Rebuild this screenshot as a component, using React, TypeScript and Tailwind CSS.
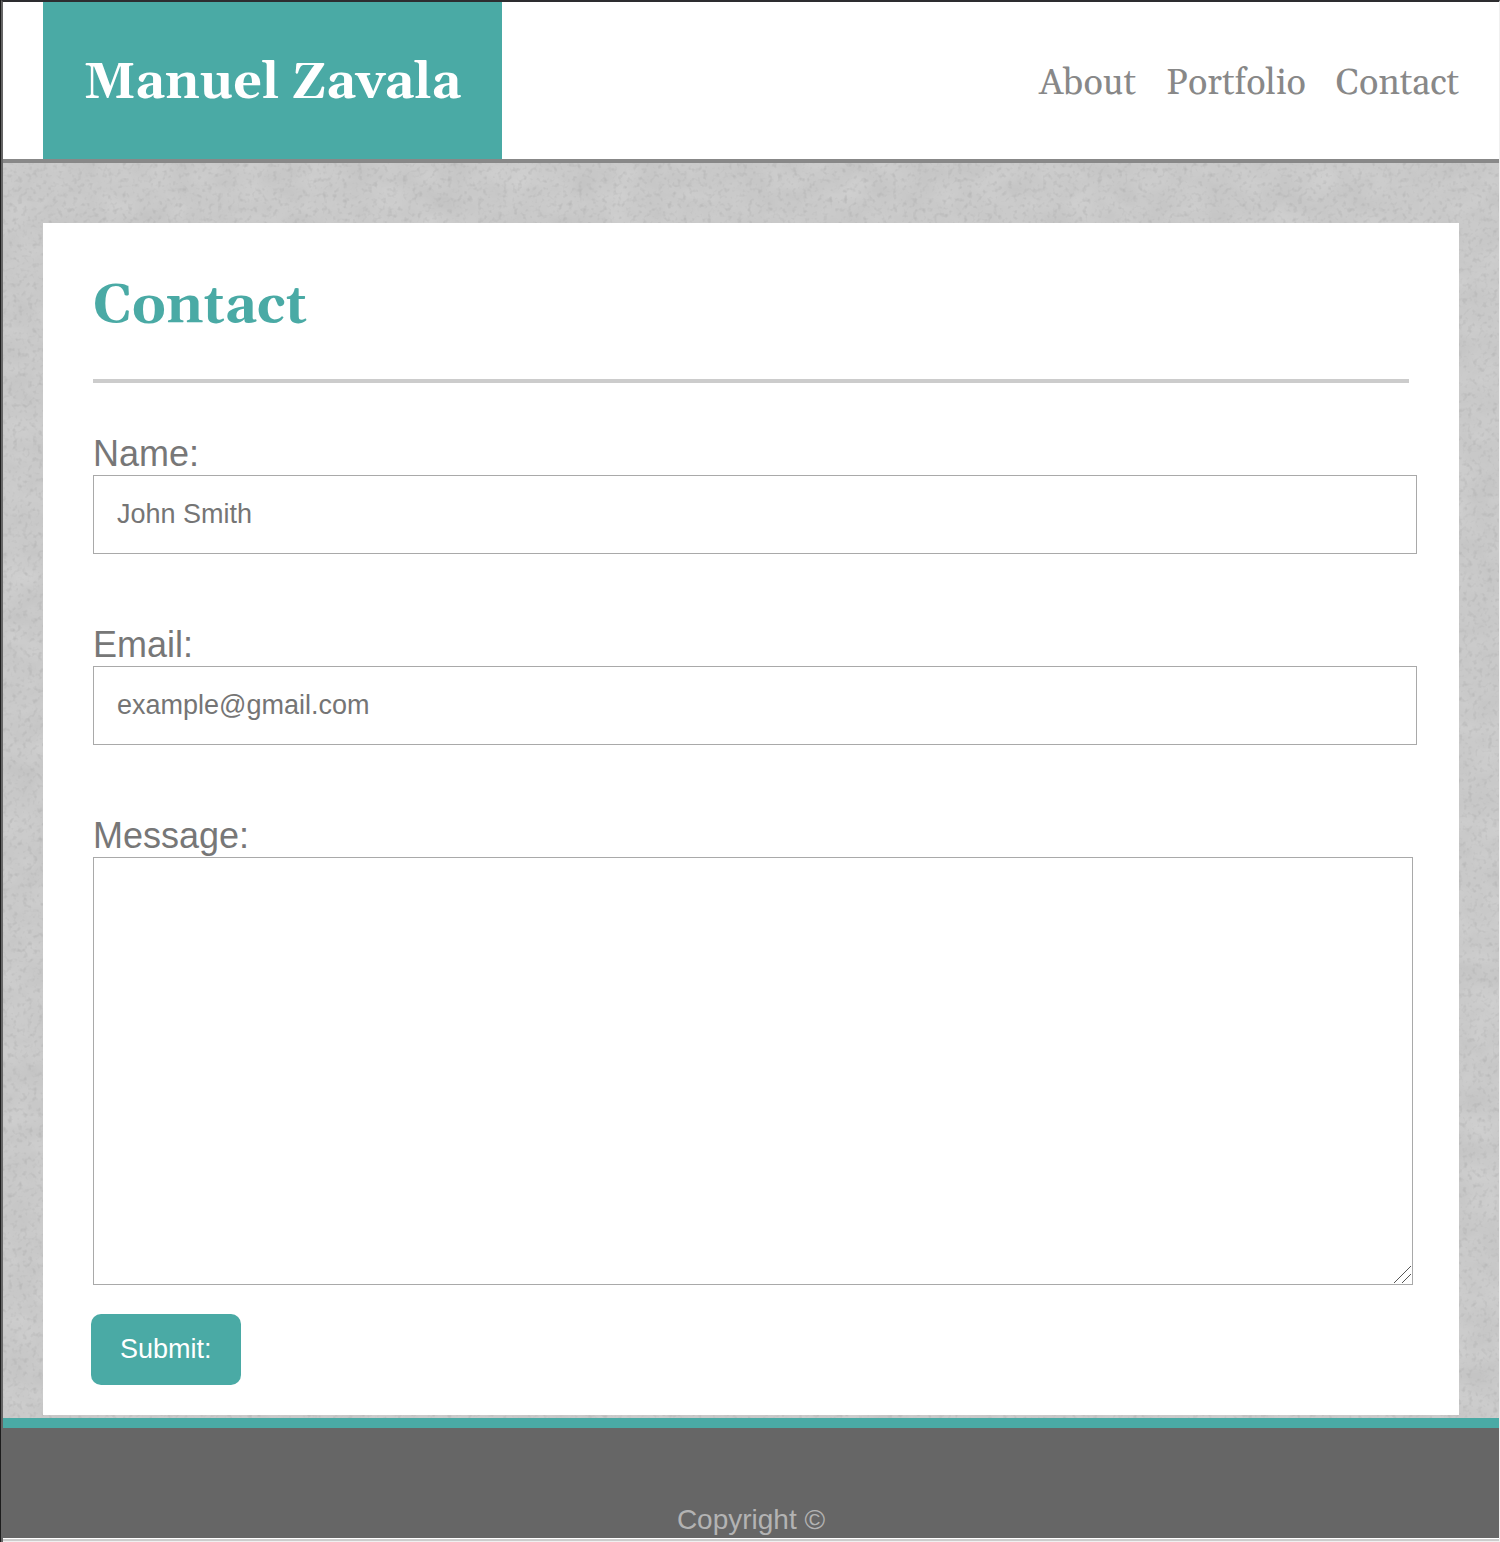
import React from "react";

const links = ["About", "Portfolio", "Contact"];

function Paper() {
  return (
    <svg className="absolute inset-0 -z-10 h-full w-full" aria-hidden="true">
      <filter id="grain" x="0" y="0" width="100%" height="100%" colorInterpolationFilters="sRGB">
        <feTurbulence type="fractalNoise" baseFrequency="0.03 0.04" numOctaves="4" seed="4" result="n" />
        <feColorMatrix in="n" values="0.04 0.04 0 0 0.75  0.04 0.04 0 0 0.75  0.04 0.04 0 0 0.75  0 0 0 0 1" result="base" />
        <feTurbulence type="fractalNoise" baseFrequency="0.2" numOctaves="2" seed="9" result="s" />
        <feColorMatrix in="s" values="0 0 0 0 0.68  0 0 0 0 0.68  0 0 0 0 0.68  1.6 0 0 0 -0.84" result="specks" />
        <feMerge>
          <feMergeNode in="base" />
          <feMergeNode in="specks" />
        </feMerge>
      </filter>
      <rect width="100%" height="100%" filter="url(#grain)" />
    </svg>
  );
}

function Field({ id, label, type, placeholder }: { id: string; label: string; type: string; placeholder: string }) {
  return (
    <div className="mb-[70px]">
      <label htmlFor={id} className="block text-4xl leading-[42px]">
        {label}
      </label>
      <input
        id={id}
        type={type}
        placeholder={placeholder}
        className="block h-[79px] w-[calc(100%+8px)] border border-[#a9a9a9] bg-white px-[23px] text-[27px] text-[#757575] placeholder:text-[#757575]"
      />
    </div>
  );
}

export default function App() {
  return (
    <div className="border-l border-[#1d1d1d] font-['Liberation_Sans',Arial,sans-serif]">
      <div className="border-t-2 border-r border-l-2 border-t-[#2d2d30] border-r-[#f0f0f0] border-l-[#666666] bg-white">
        <header className="flex items-center justify-between border-b-4 border-[#888888] px-10">
          <a
            href="#"
            className="flex h-[157px] items-center bg-[#4aaaa5] px-[41px] pt-1.5 font-[Georgia,Gelasio,'Liberation_Serif',serif] text-[50px] font-bold whitespace-nowrap text-white"
          >
            Manuel Zavala
          </a>
          <nav className="flex gap-[30px] pt-1.5 font-[Georgia,Gelasio,'Liberation_Serif',serif] text-4xl text-[#888888]">
            {links.map((l) => (
              <a key={l} href={`#${l.toLowerCase()}`}>
                {l}
              </a>
            ))}
          </nav>
        </header>

        <main className="relative isolate px-10 pt-[60px] pb-[3px]">
          <Paper />
          <section className="bg-white px-[50px] pt-[53px] pb-[30px] text-[#777777]">
            <h1 className="mb-[43px] font-[Georgia,Gelasio,'Liberation_Serif',serif] text-[54px] leading-[60px] font-bold text-[#4aaaa5]">
              Contact
            </h1>
            <hr className="mb-[50px] border-t-4 border-[#cccccc]" />
            <form onSubmit={(e) => e.preventDefault()}>
              <Field id="name" label="Name:" type="text" placeholder="John Smith" />
              <Field id="email" label="Email:" type="email" placeholder="example@gmail.com" />
              <label htmlFor="message" className="block text-4xl leading-[42px]">
                Message:
              </label>
              <div className="relative w-[calc(100%+4px)]">
                <textarea
                  id="message"
                  className="block h-[428px] w-full resize-y border border-[#a9a9a9] bg-white p-[23px] text-[27px] [&::-webkit-resizer]:bg-white"
                />
                <svg
                  className="pointer-events-none absolute right-0.5 bottom-0.5 h-[17px] w-[17px]"
                  viewBox="0 0 17 17"
                  fill="none"
                  stroke="#555555"
                  aria-hidden="true"
                >
                  <path d="M0 17L17 0M8 17L17 8" />
                </svg>
              </div>
              <button
                type="submit"
                className="mt-[29px] -ml-0.5 block h-[71px] rounded-[10px] bg-[#4aaaa5] px-[29px] text-[27px] text-white"
              >
                Submit:
              </button>
            </form>
          </section>
        </main>

        <footer className="border-t-10 border-[#4aaaa5] bg-[#666666] pt-[76px] pb-0.5 text-center text-[28px] leading-8 text-[#b3b3b3]">
          Copyright ©
        </footer>
        <div className="mt-px h-[3px] border-t-2 border-[#cccccc] bg-[#f0f0f0]" />
      </div>
    </div>
  );
}
